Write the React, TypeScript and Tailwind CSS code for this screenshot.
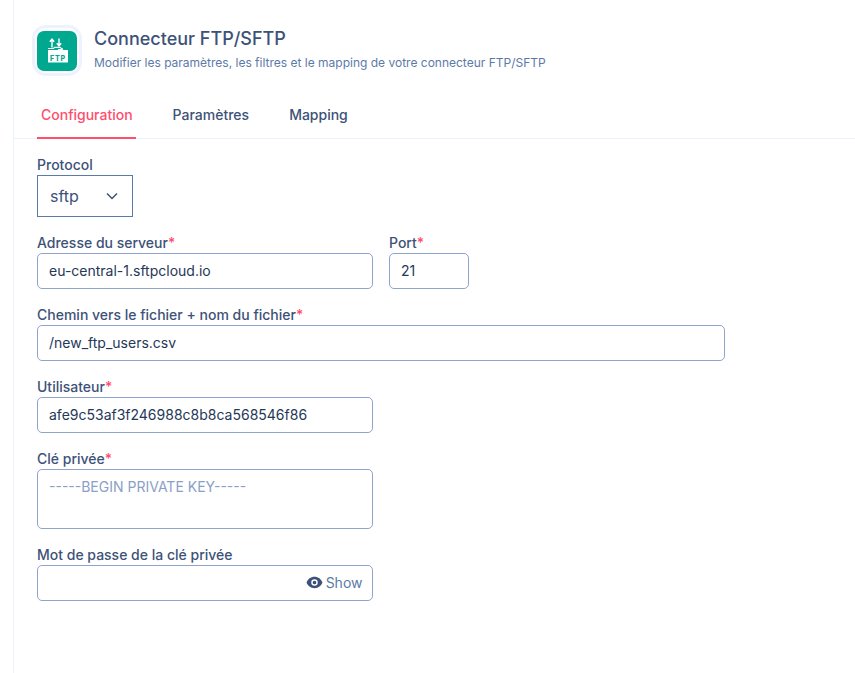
import React from "react";

function Label({ text, req }: { text: string; req?: boolean }) {
  return (
    <div className="text-[14px] leading-[18px] font-medium text-[#3d5278] h-[18px]">
      {text}
      {req && <span className="text-[#ff4d6d]">*</span>}
    </div>
  );
}

function Field({ value, width }: { value: string; width: string }) {
  return (
    <div className={`${width} h-[36px] mt-[1px] rounded-[5px] border border-[#8fa3cc] bg-white px-[11px] pb-[2px] flex items-center text-[14px] text-[#253858]`}>
      {value}
    </div>
  );
}

function Icon() {
  return (
    <div className="w-[50px] h-[51px] rounded-[14px] border-[3px] border-[#edf3fe] flex items-center justify-center bg-white">
      <div className="w-[40px] h-[40px] rounded-[7px] bg-[#00a88f] flex items-center justify-center">
        <svg width="26" height="26" viewBox="0 0 26 26" fill="none">
          <path d="M8 9.5V1.5M5.8 3.8L8 1.2l2.2 2.6" stroke="#fff" strokeWidth="1.4" />
          <path d="M15 0.5V7.5M12.8 5.2L15 7.8l2.2-2.6" stroke="#fff" strokeWidth="1.4" />
          <path d="M4 10.5h5.5l1 -1.2h5.5l2 1.6 h1" stroke="#fff" strokeWidth="1.2" />
          <path d="M4 12h9.5l1.2-1h3.3l1.5 1H24v12.5H4z" fill="#fff" />
          <text x="14" y="22.5" textAnchor="middle" fontSize="7" fontWeight="800" fill="#00a88f" letterSpacing="0.8" fontFamily="Inter, sans-serif">FTP</text>
        </svg>
      </div>
    </div>
  );
}

export default function App() {
  return (
    <div className="min-h-[673px] bg-white font-['Inter',sans-serif] pl-[13px] overflow-hidden">
      <div className="min-h-[673px] border-l border-[#edf3fe] pt-[25px]">
        <div className="flex pl-[18px] gap-[12px] h-[50px]">
          <Icon />
          <div>
            <div className="text-[18px] leading-[24px] font-medium text-[#3d5278] mt-[2px]">Connecteur FTP/SFTP</div>
            <div className="text-[12px] leading-[18px] text-[#5c7aa8] mt-[3px]">
              Modifier les paramètres, les filtres et le mapping de votre connecteur FTP/SFTP
            </div>
          </div>
        </div>

        <div className="flex mt-[14px] pl-[23px] border-b border-[#edf3fe] h-[50px] text-[14px] font-medium">
          <div className="h-[50px] pt-[2px] pl-[4px] pr-[3px] border-b-2 border-[#ff4d6d] text-[#ff4d6d] flex items-center">Configuration</div>
          <div className="h-[50px] pt-[2px] pl-[37px] pr-[4px] border-b-2 border-transparent text-[#3d5278] flex items-center">Paramètres</div>
          <div className="h-[50px] pt-[2px] pl-[36px] border-b-2 border-transparent text-[#3d5278] flex items-center">Mapping</div>
        </div>

        <div className="pl-[23px] pt-[17px]">
          <Label text="Protocol" />
          <div className="w-[96px] h-[42px] mt-[1px] border border-[#5c7aa8] flex items-center justify-between pl-[12px] pr-[13px] text-[16px] text-[#3d5278]">
            sftp
            <svg width="14" height="14" viewBox="0 0 14 14" fill="none">
              <path d="M2 4.5l5 5 5-5" stroke="#3d5278" strokeWidth="1.5" />
            </svg>
          </div>

          <div className="flex gap-[16px] mt-[17px]">
            <div>
              <Label text="Adresse du serveur" req />
              <Field value="eu-central-1.sftpcloud.io" width="w-[336px]" />
            </div>
            <div>
              <Label text="Port" req />
              <Field value="21" width="w-[80px]" />
            </div>
          </div>

          <div className="mt-[17px]">
            <Label text="Chemin vers le fichier + nom du fichier" req />
            <Field value="/new_ftp_users.csv" width="w-[688px]" />
          </div>

          <div className="mt-[17px]">
            <Label text="Utilisateur" req />
            <Field value="afe9c53af3f246988c8b8ca568546f86" width="w-[336px]" />
          </div>

          <div className="mt-[17px]">
            <Label text="Clé privée" req />
            <div className="w-[336px] h-[60px] mt-[1px] rounded-[5px] border border-[#8fa3cc] px-[11px] pt-[7px] text-[14px] leading-[20px] text-[#8ba0c6]">
              -----BEGIN PRIVATE KEY-----
            </div>
          </div>

          <div className="mt-[17px]">
            <Label text="Mot de passe de la clé privée" />
            <div className="w-[336px] h-[36px] mt-[1px] rounded-[5px] border border-[#8fa3cc] flex items-center justify-end pr-[9.5px] pb-[2px] gap-[3px] text-[14px] text-[#5c7aa8]">
              <svg width="17" height="17" viewBox="0 0 24 24" fill="#3d5278">
                <path fillRule="evenodd" d="M12 4C6.8 4 2.4 7.3.8 12c1.6 4.7 6 8 11.2 8s9.6-3.3 11.2-8C21.6 7.3 17.2 4 12 4zm0 12.6a4.6 4.6 0 1 1 0-9.2 4.6 4.6 0 0 1 0 9.2zM12 9.4a2.6 2.6 0 1 0 0 5.2 2.6 2.6 0 0 0 0-5.2z" />
              </svg>
              Show
            </div>
          </div>
        </div>
      </div>
    </div>
  );
}
